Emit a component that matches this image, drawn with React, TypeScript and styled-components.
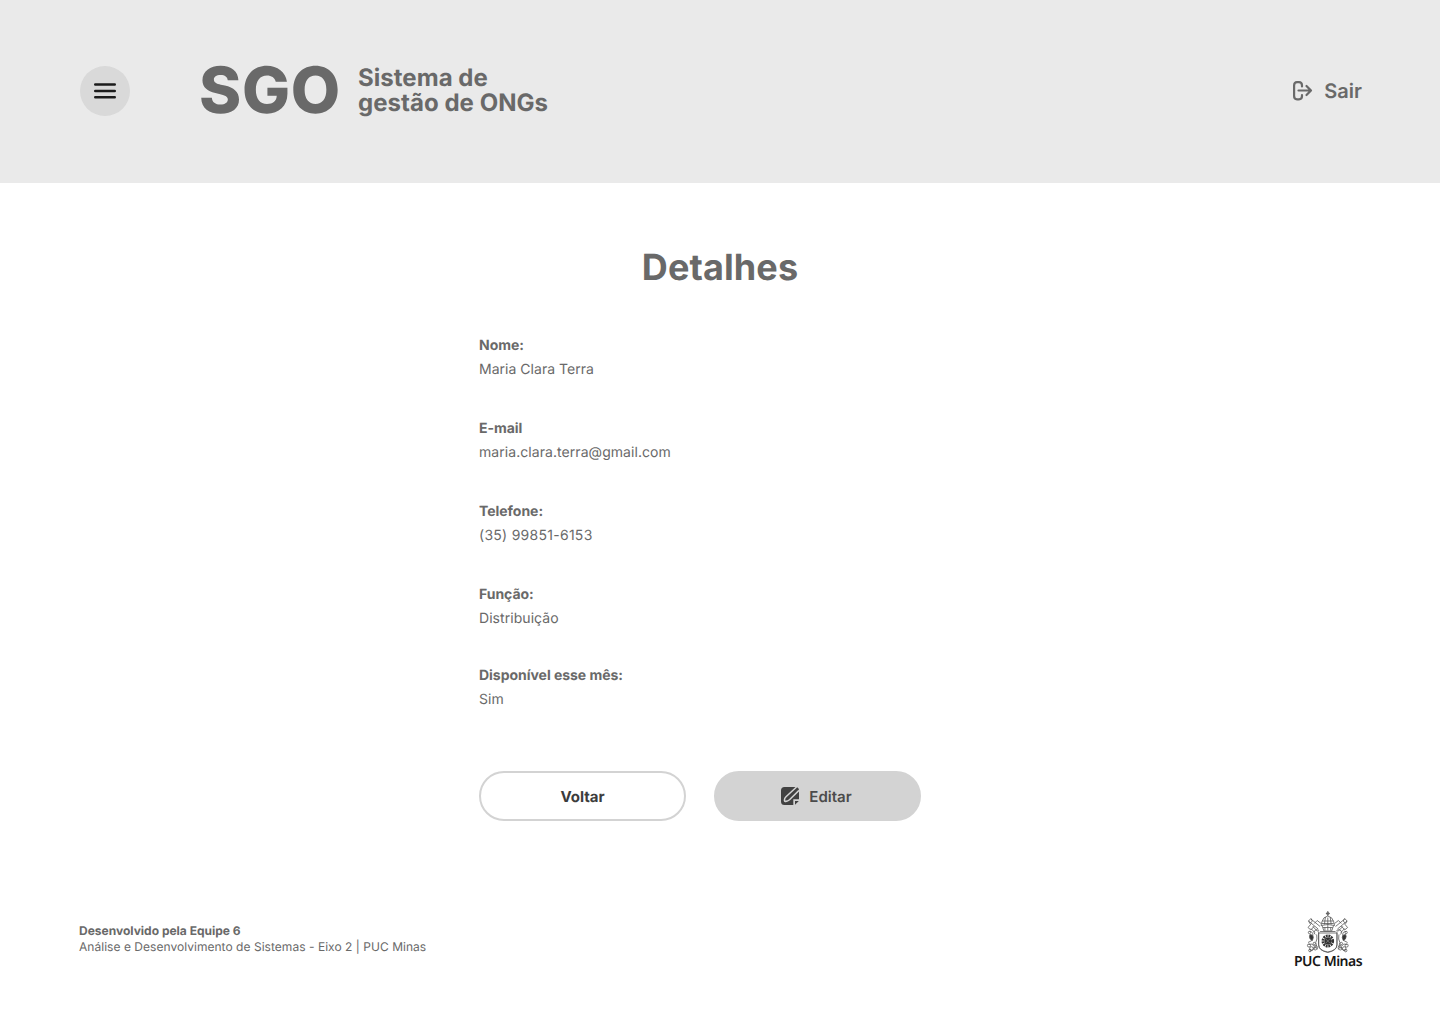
import React from 'react';
import styled, { createGlobalStyle } from 'styled-components';

const GlobalStyle = createGlobalStyle`
  *, *::before, *::after { box-sizing: border-box; }
  body {
    margin: 0;
    background: #fff;
    color: #696969;
    font-family: Inter, "Liberation Sans", sans-serif;
    text-rendering: geometricPrecision;
  }
  button { font: inherit; cursor: pointer; text-rendering: inherit; }
  h1, p, dl, dd { margin: 0; }
`;

const Page = styled.div`
  display: flex;
  flex-direction: column;
  min-height: 1024px;
`;

const Header = styled.header`
  display: flex;
  align-items: center;
  height: 183px;
  padding: 0 78px 2px 80px;
  background: #eaeaea;
`;

const MenuButton = styled.button`
  display: grid;
  place-items: center;
  width: 50px;
  height: 50px;
  padding: 0;
  border: 0;
  border-radius: 50%;
  background: #d9d9d9;
`;

const Brand = styled.div`
  display: flex;
  align-items: center;
  margin-left: 69px;
`;

const Acronym = styled.span`
  width: 159px;
  font-size: 64px;
  font-weight: 800;
  line-height: 64px;
  letter-spacing: 0.7px;
`;

const Tagline = styled.p`
  padding-bottom: 2px;
  font-size: 24px;
  font-weight: 700;
  line-height: 25px;
  letter-spacing: 0.04px;
`;

const LogoutButton = styled.button`
  display: flex;
  align-items: center;
  gap: 11px;
  margin-left: auto;
  padding: 0;
  border: 0;
  background: none;
  color: #696969;
  && { font-size: 20px; font-weight: 600; line-height: 24px; }
`;

const Main = styled.main`
  display: flex;
  flex-direction: column;
  width: 482px;
  margin: 0 auto;
  padding-top: 62px;
`;

const Title = styled.h1`
  text-align: center;
  font-size: 36px;
  font-weight: 700;
  line-height: 44px;
  letter-spacing: 0.1px;
`;

const Details = styled.dl`
  display: flex;
  flex-direction: column;
  margin-top: 45px;
`;

const Field = styled.div<{ $height: number }>`
  height: ${(p) => p.$height}px;
  font-size: 14px;
  line-height: 24px;
`;

const Label = styled.dt`
  font-weight: 700;
  letter-spacing: -0.03px;
`;

const Value = styled.dd<{ $tracking?: number }>`
  letter-spacing: ${(p) => p.$tracking ?? 0.06}px;
`;

const Actions = styled.div`
  display: flex;
  gap: 28px;
`;

const Button = styled.button<{ $filled?: boolean }>`
  display: flex;
  align-items: center;
  justify-content: center;
  gap: 10px;
  width: 207px;
  height: 50px;
  padding: 0 ${(p) => (p.$filled ? 2 : 0)}px 0 0;
  border: 2px solid #d3d3d3;
  border-radius: 25px;
  background: ${(p) => (p.$filled ? '#d3d3d3' : '#fff')};
  color: ${(p) => (p.$filled ? '#4b4b4b' : '#3c3c3c')};
  && { font-size: 15px; font-weight: ${(p) => (p.$filled ? 600 : 700)}; }
`;

const Footer = styled.footer`
  display: flex;
  align-items: flex-start;
  justify-content: space-between;
  margin-top: 88px;
  padding: 0 76px 0 79px;
`;

const Credits = styled.p`
  padding-top: 14px;
  font-size: 12px;
  line-height: 16px;
`;

const Course = styled.span`
  letter-spacing: 0.035px;
`;

const University = styled.div`
  display: flex;
  flex-direction: column;
  width: 70px;
`;

const UniversityName = styled.span`
  color: #171717;
  font-family: "Noto Sans", "Open Sans", sans-serif;
  font-size: 14px;
  font-weight: 600;
  line-height: 18px;
  letter-spacing: -0.5px;
  white-space: nowrap;
`;

const MenuIcon = () => (
  <svg width="22" height="18" viewBox="0 0 22 18" stroke="#1b1b1b" strokeWidth="2.5" strokeLinecap="round">
    <path d="M1.25 2.5h19.5M1.25 9h19.5M1.25 15.3h19.5" />
  </svg>
);

const LogoutIcon = () => (
  <svg width="21" height="20" viewBox="0 0 21 20" fill="none" stroke="#696969" strokeWidth="2.2" strokeLinecap="round" strokeLinejoin="round">
    <path d="M10 5.500V4.500Q10 1.100 7 1.100H5Q2.100 1.100 2.100 4.500v10.500q0 3.300 2.900 3.300h2q3 0 3-3.300v-1M6.500 9.500h12.300M14.500 5l4.500 4.500-4.500 4.500" />
  </svg>
);

const EditIcon = () => (
  <svg width="18" height="18" viewBox="0 0 18 18">
    <path fill="#414141" d="M3.500 0h11Q18 0 18 3.500v8.700h-5.700V18H3.500Q0 18 0 14.500V3.500Q0 0 3.500 0Z" />
    <path fill="#414141" d="M14 14h3.800L14 17.800Z" />
    <path fill="none" stroke="#d3d3d3" strokeWidth="1.500" strokeLinejoin="round" d="M15.600 0 5 9.800Q2.800 12 3.700 14.200q2.500.7 4.800-1.400L18 3.400" />
  </svg>
);

const Beads = ({ points }: { points: number[][] }) => (
  <>
    {points.map(([x, y, r]) => (
      <circle key={`${x}-${y}`} cx={x} cy={y} r={r} />
    ))}
  </>
);

const HalfCrest = () => (
  <g>
    <path d="M26 16 16.500 8.500M24 18.500 14 10.500M14 10.500l2.500-2.500 1.500 2.500-2.500 2.500zM17 13l-3.500 4 3 2.500 3.500-4M18.500 16l5 5M16.500 18l4 4M20 13l3-3 4 3" />
    <path d="M25 20q-3-2-5 .5-1 2 1 3.500M24.500 21v13q0 6 9.500 7.500" />
    <path d="M15 21q4 0 3.500 4l-1 5-4 2M22.500 24q1 5-1 8 2 3-1 6M14 34q4-2 6 2-1 6-5 3M20 35q4-1 3 4" />
    <path fill="#333" d="M15.500 24q3.500 0 3.500 3l-1 3q-3-1-3-4z" />
    <Beads points={[[15, 22, 1.2], [14.500, 35, 1.6], [17, 38, 1.800], [21, 38, 1.500], [15.500, 40, 1.300], [20, 33, 1.200]]} />
  </g>
);

const Crest = () => (
  <svg width="70" height="44" viewBox="0 0 70 44" aria-hidden="true">
    <g fill="none" stroke="#555" strokeWidth=".8" strokeLinejoin="round" transform="translate(1 1.500) scale(.965 1)">
      <HalfCrest />
      <g transform="translate(68 0) scale(-1 1)"><HalfCrest /></g>
      <circle cx="34" cy="3" r="1.300" />
      <path d="M34 .5v5M32 3h4M28 11q1-4.500 6-5.500 5 1 6 5.500L41 15q-7-2-14 0zM28 10.500h12M28 13h12M31.500 6.500 30.500 14M36.500 6.500 37.500 14M28 15l2 5.500h8l2-5.500M29 17h10M31 17v3M34 7v13M37 17v3M26 21h16M24.500 22.500h19v12q0 5.500-9.500 7.500-9.500-2-9.500-7.500z" />
      <circle cx="34" cy="30.500" r="5" stroke="#333" strokeWidth="3" strokeDasharray="1.900 .718" />
      <circle cx="34" cy="30.500" r="3.500" fill="#333" stroke="none" />
      <path d="m32 28.500 4 4m0-4-4 4" stroke="#aaa" strokeWidth=".5" />
    </g>
  </svg>
);

const fields = [
  { label: 'Nome:', value: 'Maria Clara Terra', height: 83, tracking: 0.03 },
  { label: 'E-mail', value: 'maria.clara.terra@gmail.com', height: 83 },
  { label: 'Telefone:', value: '(35) 99851-6153', height: 83, tracking: 0.27 },
  { label: 'Função:', value: 'Distribuição', height: 81 },
  { label: 'Disponível esse mês:', value: 'Sim', height: 107 },
];

export default function App() {
  return (
    <Page>
      <GlobalStyle />
      <Header>
        <MenuButton aria-label="Menu"><MenuIcon /></MenuButton>
        <Brand>
          <Acronym>SGO</Acronym>
          <Tagline>Sistema de<br />gestão de ONGs</Tagline>
        </Brand>
        <LogoutButton><LogoutIcon />Sair</LogoutButton>
      </Header>
      <Main>
        <Title>Detalhes</Title>
        <Details>
          {fields.map((f) => (
            <Field key={f.label} $height={f.height}>
              <Label>{f.label}</Label>
              <Value $tracking={f.tracking}>{f.value}</Value>
            </Field>
          ))}
        </Details>
        <Actions>
          <Button>Voltar</Button>
          <Button $filled><EditIcon />Editar</Button>
        </Actions>
      </Main>
      <Footer>
        <Credits>
          <b>Desenvolvido pela Equipe 6</b><br />
          <Course>Análise e Desenvolvimento de Sistemas - Eixo 2 | PUC Minas</Course>
        </Credits>
        <University>
          <Crest />
          <UniversityName>PUC Minas</UniversityName>
        </University>
      </Footer>
    </Page>
  );
}
